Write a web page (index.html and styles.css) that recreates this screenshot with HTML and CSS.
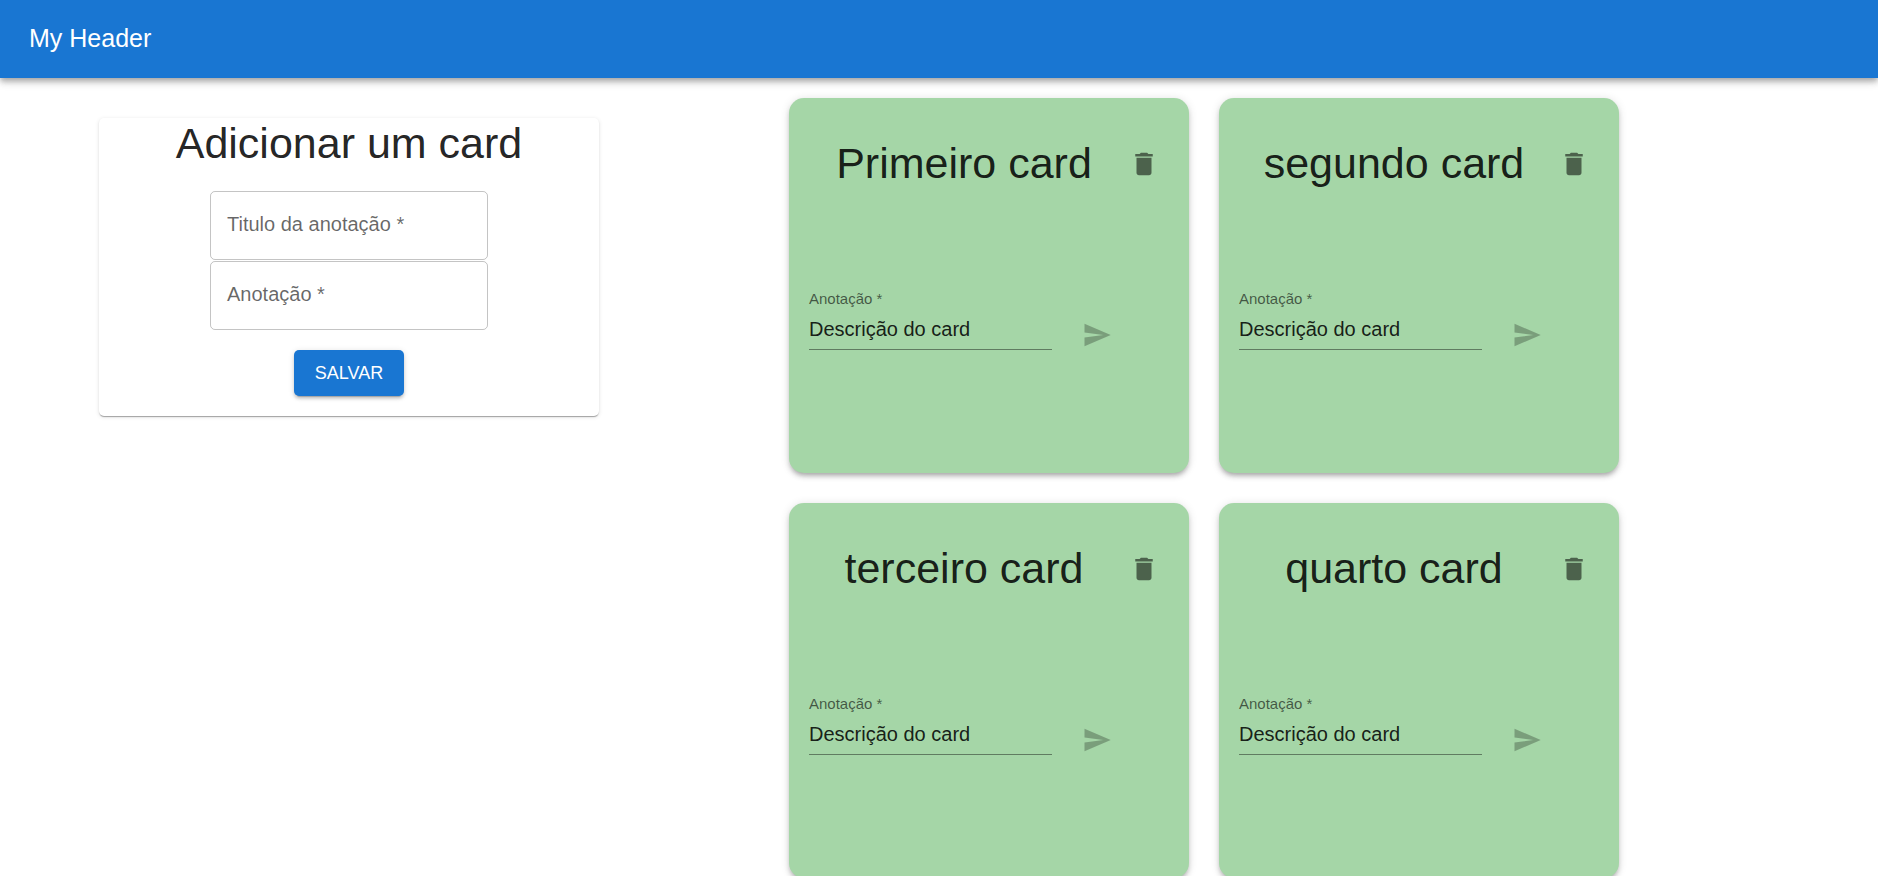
FILE: index.html
```html
<!DOCTYPE html>
<html lang="pt-BR">
<head>
<meta charset="utf-8">
<meta name="viewport" content="width=device-width, initial-scale=1">
<title>My Header</title>
<link rel="stylesheet" href="styles.css">
</head>
<body>
<svg class="sprite" aria-hidden="true">
  <symbol id="icon-delete" viewBox="0 0 24 24"><path d="M6 19c0 1.1.9 2 2 2h8c1.100 0 2-.9 2-2V7H6v12zM19 4h-3.500l-1-1h-5l-1 1H5v2h14V4z"/></symbol>
  <symbol id="icon-send" viewBox="0 0 24 24"><path d="M2.010 21 23 12 2.010 3 2 10l15 2-15 2z"/></symbol>
</svg>

<header class="app-bar">
  <h1 class="app-title">My Header</h1>
</header>

<main class="content">
  <form class="add-form">
    <h2 class="heading">Adicionar um card</h2>
    <div class="outlined-field">
      <input class="outlined-input" id="new-title" type="text" placeholder=" " required>
      <label class="outlined-label" for="new-title">Titulo da anotação *</label>
    </div>
    <div class="outlined-field">
      <input class="outlined-input" id="new-note" type="text" placeholder=" " required>
      <label class="outlined-label" for="new-note">Anotação *</label>
    </div>
    <button class="save-button" type="submit">SALVAR</button>
  </form>

  <section class="cards" aria-label="Cards">
    <article class="card">
      <div class="card-header">
        <h2 class="heading card-title">Primeiro card</h2>
        <button class="delete-button" type="button" aria-label="Excluir"><svg class="icon"><use href="#icon-delete"/></svg></button>
      </div>
      <form class="note-form">
        <div class="note-field">
          <label class="note-label" for="note-1">Anotação *</label>
          <input class="note-input" id="note-1" type="text" value="Descrição do card" required>
        </div>
        <button class="send-button" type="submit" aria-label="Enviar" disabled><svg class="icon"><use href="#icon-send"/></svg></button>
      </form>
    </article>
    <article class="card">
      <div class="card-header">
        <h2 class="heading card-title">segundo card</h2>
        <button class="delete-button" type="button" aria-label="Excluir"><svg class="icon"><use href="#icon-delete"/></svg></button>
      </div>
      <form class="note-form">
        <div class="note-field">
          <label class="note-label" for="note-2">Anotação *</label>
          <input class="note-input" id="note-2" type="text" value="Descrição do card" required>
        </div>
        <button class="send-button" type="submit" aria-label="Enviar" disabled><svg class="icon"><use href="#icon-send"/></svg></button>
      </form>
    </article>
    <article class="card">
      <div class="card-header">
        <h2 class="heading card-title">terceiro card</h2>
        <button class="delete-button" type="button" aria-label="Excluir"><svg class="icon"><use href="#icon-delete"/></svg></button>
      </div>
      <form class="note-form">
        <div class="note-field">
          <label class="note-label" for="note-3">Anotação *</label>
          <input class="note-input" id="note-3" type="text" value="Descrição do card" required>
        </div>
        <button class="send-button" type="submit" aria-label="Enviar" disabled><svg class="icon"><use href="#icon-send"/></svg></button>
      </form>
    </article>
    <article class="card">
      <div class="card-header">
        <h2 class="heading card-title">quarto card</h2>
        <button class="delete-button" type="button" aria-label="Excluir"><svg class="icon"><use href="#icon-delete"/></svg></button>
      </div>
      <form class="note-form">
        <div class="note-field">
          <label class="note-label" for="note-4">Anotação *</label>
          <input class="note-input" id="note-4" type="text" value="Descrição do card" required>
        </div>
        <button class="send-button" type="submit" aria-label="Enviar" disabled><svg class="icon"><use href="#icon-send"/></svg></button>
      </form>
    </article>
  </section>
</main>
</body>
</html>
```

FILE: styles.css
```css
*,
*::before,
*::after {
  box-sizing: border-box;
}

body {
  margin: 0;
  background: #fff;
  color: rgba(0, 0, 0, 0.87);
  font-family: "Liberation Sans", Arial, Helvetica, sans-serif;
  font-size: 20px;
}

button,
input {
  margin: 0;
  font: inherit;
  color: inherit;
}

button {
  border: 0;
  background: none;
  cursor: pointer;
}

.sprite {
  display: none;
}

.icon {
  display: block;
  width: 30px;
  height: 30px;
  fill: currentColor;
}

.app-bar {
  position: relative;
  display: flex;
  align-items: center;
  min-height: 78px;
  padding: 0 29px 2px;
  background: #1976d2;
  color: #fff;
  box-shadow: 0 3px 5px -1px rgba(0, 0, 0, 0.2), 0 5px 6px 0 rgba(0, 0, 0, 0.14), 0 1px 13px 0 rgba(0, 0, 0, 0.12);
}

.app-title {
  margin: 0;
  font-size: 25px;
  font-weight: 500;
  line-height: 40px;
}

.content {
  display: flex;
  align-items: flex-start;
  gap: 190px;
  padding: 20px 99px 0;
}

.heading {
  margin: 0;
  font-size: 43px;
  font-weight: 400;
  line-height: 50px;
  text-align: center;
}

.add-form {
  display: flex;
  flex: 0 1 500px;
  flex-direction: column;
  align-items: center;
  gap: 1px;
  margin-top: 20px;
  padding-bottom: 20px;
  border-radius: 5px;
  background: #fff;
  box-shadow: 0 2px 1px -1px rgba(0, 0, 0, 0.2), 0 1px 1px 0 rgba(0, 0, 0, 0.14), 0 1px 4px 0 rgba(0, 0, 0, 0.12);
}

.add-form .heading {
  margin-bottom: 22px;
}

.outlined-field {
  position: relative;
  width: 278px;
}

.outlined-input {
  display: block;
  width: 100%;
  height: 69px;
  padding: 0 17px;
  border: 1px solid rgba(0, 0, 0, 0.23);
  border-radius: 5px;
  background: transparent;
  outline: 0;
}

.outlined-label {
  position: absolute;
  top: 19px;
  left: 17px;
  color: rgba(0, 0, 0, 0.6);
  line-height: 28px;
  pointer-events: none;
}

.outlined-input:focus {
  border-color: #1976d2;
}

.outlined-input:focus + .outlined-label,
.outlined-input:not(:placeholder-shown) + .outlined-label {
  top: -9px;
  padding: 0 5px;
  background: #fff;
  font-size: 15px;
  line-height: 18px;
}

.save-button {
  min-width: 110px;
  margin-top: 19px;
  padding: 8px 20px;
  border-radius: 5px;
  background: #1976d2;
  color: #fff;
  font-size: 18px;
  font-weight: 500;
  line-height: 30px;
  box-shadow: 0 4px 1px -3px rgba(0, 0, 0, 0.2), 0 3px 3px 0 rgba(0, 0, 0, 0.14), 0 1px 6px 0 rgba(0, 0, 0, 0.12);
}

.cards {
  display: grid;
  flex: 1;
  grid-template-columns: repeat(auto-fill, 400px);
  gap: 30px;
}

.card {
  min-height: 375px;
  padding: 40px 20px;
  border-radius: 15px;
  background: #a5d6a7;
  box-shadow: 0 4px 4px -3px rgba(0, 0, 0, 0.2), 0 4px 5px 0 rgba(0, 0, 0, 0.14), 0 1px 10px 0 rgba(0, 0, 0, 0.12);
}

.card-header {
  display: flex;
  align-items: center;
  min-height: 52px;
}

.card-title {
  flex: 1;
  align-self: flex-start;
}

.delete-button {
  padding: 10px;
  border-radius: 50%;
  color: rgba(0, 0, 0, 0.54);
}

.note-form {
  display: flex;
  align-items: flex-end;
  gap: 5px;
  margin-top: 100px;
}

.note-field {
  width: 243px;
}

.note-label {
  display: block;
  color: rgba(0, 0, 0, 0.6);
  font-size: 15px;
  line-height: 18px;
}

.note-input {
  display: block;
  width: 100%;
  height: 42px;
  padding: 10px 0 8px;
  border: 0;
  border-bottom: 1px solid rgba(0, 0, 0, 0.42);
  border-radius: 0;
  background: none;
  outline: 0;
}

.note-input:focus {
  border-bottom-color: #1976d2;
}

.send-button {
  display: flex;
  justify-content: center;
  width: 80px;
  padding: 0;
  color: #1976d2;
}

.send-button:disabled {
  color: rgba(0, 0, 0, 0.26);
  cursor: default;
}
```
